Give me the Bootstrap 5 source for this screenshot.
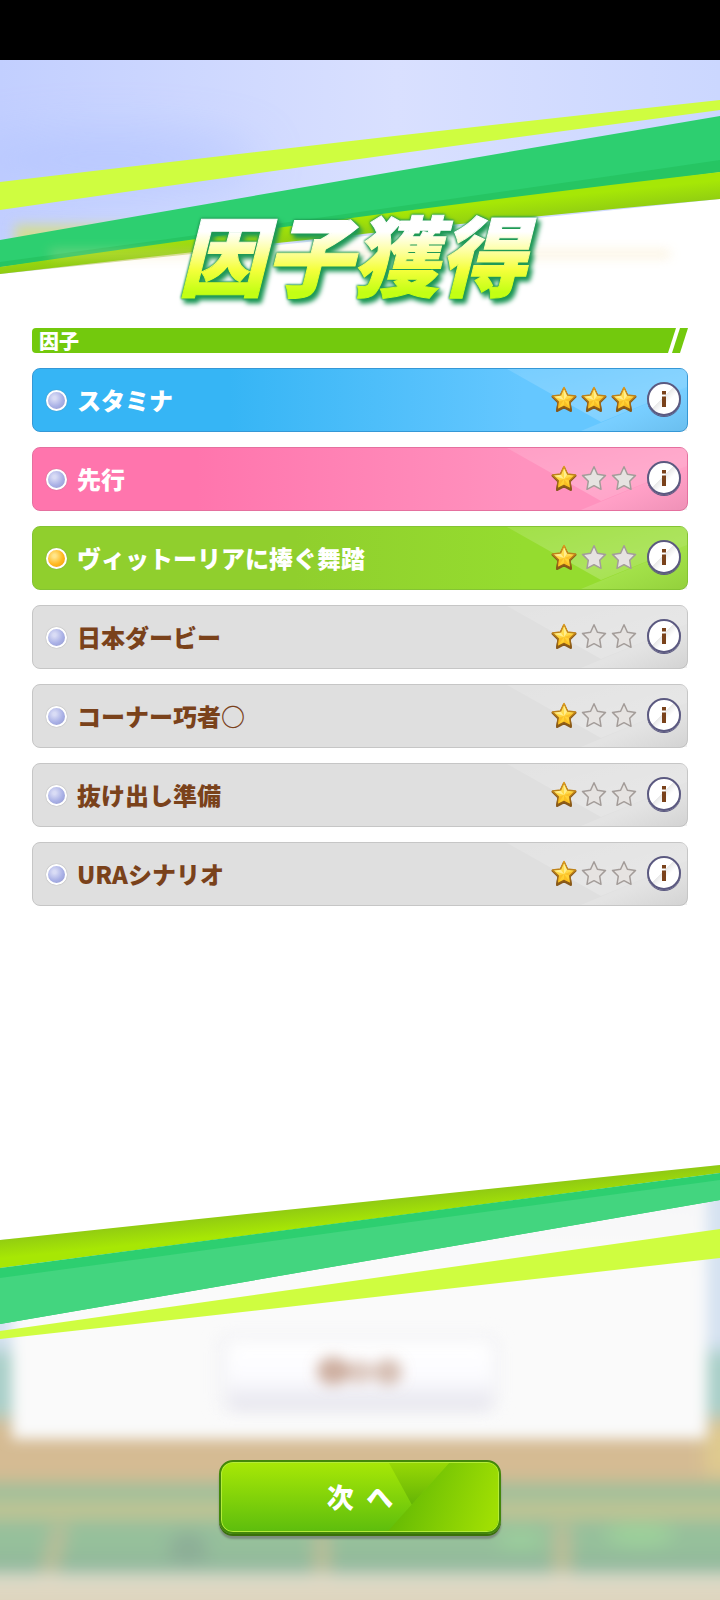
<!DOCTYPE html>
<html lang="ja">
<head>
<meta charset="utf-8">
<meta name="viewport" content="width=device-width, initial-scale=1">
<title>因子獲得</title>
<link href="https://cdn.jsdelivr.net/npm/bootstrap@5.3.0/dist/css/bootstrap.min.css" rel="stylesheet">
<style>
  body { font-family: "Noto Sans CJK JP", sans-serif; background: #fff; }
  .status-strip { height: 60px; background: #000; }
  .hero { height: 268px; }
  .backdrop { z-index: 0; }
  .hero-title {
    z-index: 1; padding: 0 28px 0 12px; margin-bottom: 20px; font-size: 87px; line-height: 112px; font-weight: 900; font-style: italic;
    color: transparent; background: linear-gradient(#fff 32%, #fdff9c 50%, #f4ff3c 66%, #c3ff14 86%);
    -webkit-background-clip: text; background-clip: text; -webkit-text-stroke: 1px transparent;
    filter: drop-shadow(0 0 1px #1f9a55) drop-shadow(0 0 1px #1f9a55) drop-shadow(3px 4px 2px #1d9757);
  }
  .section-bar { height: 25px; margin-bottom: 15px; }
  .section-bar h2 {
    font-size: 20px; line-height: 25px; font-weight: 900; color: #fff; background: #73c90d;
    padding-left: 7px; border-radius: 4px 0 0 4px;
    clip-path: polygon(0 0, 100% 0, calc(100% - 8px) 100%, 0 100%);
  }
  .section-slash { width: 16px; margin-left: -4px; background: #73c90d; clip-path: polygon(50% 0, 100% 0, 50% 100%, 0 100%); }
  .factor-list { gap: 15px; }
  .factor {
    height: 64px; padding: 0 6px 0 13px; border: 1px solid; border-radius: 8px; font-size: 24px; line-height: 36px;
    font-weight: 900; gap: 10px;
  }
  .factor-blue { color: #fff; border-color: #3598d6; background: linear-gradient(90deg, #36b5f5 30%, #65c7ff 75%); }
  .factor-pink { color: #fff; border-color: #e5709f; background: linear-gradient(90deg, #ff75ad 25%, #ff92be 75%); }
  .factor-green { color: #fff; border-color: #84c433; background: linear-gradient(90deg, #90cf2d 40%, #95dc2f 75%); }
  .factor-gray { color: #7a421b; border-color: #c6c6c6; background: #dfdfdf; }
  .facet { width: 180px; right: 0; }
  .gem {
    width: 21px; height: 21px; border: 2px solid #fff; border-radius: 50%; box-shadow: 0 0 1px #777;
    background: radial-gradient(circle at 38% 35%, #d9dcf5 10%, #aab1e6 55%, #8f95cc 100%);
  }
  .gem-gold { background: radial-gradient(circle at 38% 35%, #ffe58a 10%, #ffb81f 55%, #ee9410 100%); }
  .stars { gap: 4px; }
  .info-btn {
    width: 34px; height: 34px; border: 2px solid #5b5980; border-radius: 50%; margin-bottom: 2px;
    background: linear-gradient(135deg, #fff 45%, #e9e9e9 46%, #fff 62%); box-shadow: 0 1px 0 #5b5980;
  }
  .scene { height: 450px; }
  .next-btn {
    z-index: 1; width: 282px; height: 74px; margin-bottom: 66px; border: 2px solid #43870a; border-radius: 14px;
    color: #fff; font-size: 27px; line-height: 40px; font-weight: 900;
    background: linear-gradient(#a8e806, #5dbd0d);
    box-shadow: inset 0 0 0 1px #b5ec39, 0 2px 0 #397008, 0 5px 2px #7c8f7c;
  }
</style>
</head>
<body class="d-flex flex-column min-vh-100">

<svg class="position-absolute" width="0" height="0" aria-hidden="true">
  <defs>
    <linearGradient id="gold" x1="0" y1="0" x2="0" y2="1"><stop offset="0" stop-color="#ffe76a"/><stop offset="1" stop-color="#ffc81d"/></linearGradient>
    <linearGradient id="goldEdge" x1="0" y1="0" x2="0" y2="1"><stop offset="0" stop-color="#dc9a1c"/><stop offset="1" stop-color="#8a5814"/></linearGradient>
    <linearGradient id="facetLight" x1="0" y1="0" x2="1" y2="1"><stop offset="0" stop-color="#fff" stop-opacity=".12"/><stop offset=".6" stop-color="#fff" stop-opacity=".22"/><stop offset="1" stop-color="#fff" stop-opacity=".12"/></linearGradient>
    <linearGradient id="facetDark" x1="0" y1="0" x2="1" y2="1"><stop offset="0" stop-color="#fff" stop-opacity=".35"/><stop offset=".55" stop-color="#fff" stop-opacity=".12"/><stop offset="1" stop-color="#888" stop-opacity=".14"/></linearGradient>
  </defs>
  <symbol id="star-on" viewBox="0 0 26 28">
    <path d="M13 2.500 16.400 9.700 24.500 10.800 18.700 16.600 20 25 13 21.300 6 25 7.300 16.600 1.500 10.800 9.600 9.700Z" fill="#85571b" stroke="#85571b" stroke-width="2" stroke-linejoin="round"/>
    <path d="M13 1.500 16.400 9 24.500 10.100 18.700 15.800 20 23.900 13 20.300 6 23.900 7.300 15.800 1.500 10.100 9.600 9Z" fill="url(#gold)" stroke="url(#goldEdge)" stroke-width="1.500" stroke-linejoin="round"/>
    <path d="M13 14 23 10.800 18 15.600ZM13 14 19 22.500 13 19.600ZM13 14 7 22.500 8 15.600Z" fill="#f9b41d" opacity=".6"/>
    <path d="M13 3.500 16 9.700 13 14ZM13 14 2.800 10.800 9.800 9.700Z" fill="#fff19a" opacity=".85"/>
  </symbol>
  <symbol id="star-off" viewBox="0 0 26 28">
    <path d="M13 1.800 16.400 9.300 24.500 10.400 18.700 16.200 20 24.300 13 20.700 6 24.300 7.300 16.200 1.500 10.400 9.600 9.300Z" fill="#e6e3e1" stroke="#a39c99" stroke-width="1.500" stroke-linejoin="round"/>
  </symbol>
  <symbol id="facet-shape" viewBox="0 0 180 62" preserveAspectRatio="none">
    <path d="M0 0H180V18L94 53Z" fill="url(#facetLight)"/>
    <path d="M74 62 180 18V62Z" fill="url(#facetDark)"/>
  </symbol>
  <symbol id="info-glyph" viewBox="0 0 6 18">
    <path d="M1 1H5V4.500H1ZM1 6.500H5V17H1Z" fill="#7a421b"/>
  </symbol>
</svg>

<div class="status-strip flex-shrink-0"></div>

<header class="hero position-relative overflow-hidden d-flex justify-content-center align-items-end flex-shrink-0">
  <svg class="backdrop position-absolute top-0 start-0 w-100 h-100" viewBox="0 0 720 268" preserveAspectRatio="none" aria-hidden="true">
    <defs>
      <linearGradient id="sky" x1="0" y1="0" x2="1" y2="0"><stop offset="0" stop-color="#c2cfff"/><stop offset=".55" stop-color="#d9e0ff"/><stop offset="1" stop-color="#cbd7ff"/></linearGradient>
      <linearGradient id="lime" gradientUnits="userSpaceOnUse" x1="352" y1="157" x2="354" y2="177"><stop offset="0" stop-color="#a6e706"/><stop offset="1" stop-color="#90cd12"/></linearGradient>
      <filter id="haze" filterUnits="userSpaceOnUse" x="-120" y="-40" width="500" height="300"><feGaussianBlur stdDeviation="24"/></filter>
      <filter id="hazeSmall" filterUnits="userSpaceOnUse" x="-30" y="130" width="780" height="120"><feGaussianBlur stdDeviation="6"/></filter>
    </defs>
    <path d="M0 0H720V268H0Z" fill="url(#sky)"/>
    <ellipse cx="110" cy="100" rx="150" ry="26" fill="#b4c5ff" opacity=".8" filter="url(#haze)"/>
    <path d="M15 165H200V210H15Z" fill="#d3dd94" filter="url(#hazeSmall)"/>
    <path d="M0 214 720 139V268H0Z" fill="#fff"/>
    <path d="M0 122Q360 79 720 40V50Q360 98 0 150Z" fill="#cffd40"/>
    <path d="M0 180Q360 117 720 56V112L0 207Z" fill="#2dcf70"/>
    <path d="M0 202Q360 153 720 100V112L0 207Z" fill="#26c563"/>
    <path d="M0 207Q360 154 720 112V139Q360 172 0 214Z" fill="url(#lime)"/>
    <path d="M50 191H670V197H50Z" fill="#f5dda0" opacity=".45" filter="url(#hazeSmall)"/>
  </svg>
  <h1 class="hero-title position-relative">因子獲得</h1>
</header>

<main class="px-4 flex-grow-1">
  <div class="px-2">
    <div class="section-bar d-flex">
      <h2 class="flex-grow-1 mb-0">因子</h2>
      <span class="section-slash"></span>
    </div>
    <ul class="factor-list list-unstyled d-flex flex-column mb-5" id="factors"></ul>
  </div>
</main>

<footer class="scene position-relative overflow-hidden d-flex justify-content-center align-items-end flex-shrink-0">
  <svg class="backdrop position-absolute top-0 start-0 w-100 h-100" viewBox="0 0 720 450" preserveAspectRatio="none" aria-hidden="true">
    <defs>
      <filter id="soft" filterUnits="userSpaceOnUse" x="-60" y="-60" width="840" height="600"><feGaussianBlur stdDeviation="9"/></filter>
      <filter id="softer" filterUnits="userSpaceOnUse" x="-60" y="-60" width="840" height="600"><feGaussianBlur stdDeviation="7"/></filter>
      <linearGradient id="limeLow" gradientUnits="userSpaceOnUse" x1="352" y1="53" x2="354" y2="73"><stop offset="0" stop-color="#91cb12"/><stop offset="1" stop-color="#a7e704"/></linearGradient>
      <linearGradient id="cardShade" x1="0" y1="0" x2="0" y2="1"><stop offset="0" stop-color="#f5f5f7"/><stop offset=".5" stop-color="#fafafa"/></linearGradient>
      <linearGradient id="ghost" x1="0" y1="0" x2="0" y2="1"><stop offset="0" stop-color="#fff"/><stop offset=".5" stop-color="#fcfcff"/><stop offset="1" stop-color="#e4e3ec"/></linearGradient>
    </defs>
    <g filter="url(#soft)">
      <path d="M-60-60H780V200H-60Z" fill="#d5e2f1"/>
      <path d="M-60 200H780V275H-60Z" fill="#a9cfc8"/>
      <path d="M-60 268H780V335H-60Z" fill="#d5bb93"/>
      <path d="M705 275H780V325H705Z" fill="#dfca8f"/>
      <path d="M-60 333H780V425H-60Z" fill="#96c09b"/>
      <path d="M-60 351H780V368H-60Z" fill="#c6c493"/>
      <path d="M-60 409H780V423H-60Z" fill="#8fb49a"/>
      <path d="M55 375H67L54 425H42ZM555 375H569V425H555ZM316 380H328V425H316Z" fill="#c5bd97"/>
      <ellipse cx="188" cy="398" rx="20" ry="16" fill="#8dae97"/>
      <ellipse cx="640" cy="385" rx="34" ry="11" fill="#9dd19a"/>
      <ellipse cx="520" cy="390" rx="24" ry="9" fill="#9bcf9c"/>
      <path d="M-60 429H780V520H-60Z" fill="#ded5bf"/>
    </g>
    <path d="M12-20H707V289H12Z" fill="url(#cardShade)" filter="url(#softer)"/>
    <rect x="214" y="182" width="288" height="82" rx="14" fill="#f3f3f6" opacity=".65" filter="url(#softer)"/>
    <rect x="228" y="192" width="264" height="68" rx="10" fill="url(#ghost)" filter="url(#softer)"/>
    <g filter="url(#softer)" fill="#bd9480">
      <ellipse cx="333" cy="221" rx="16" ry="14" opacity=".75"/>
      <ellipse cx="359" cy="222" rx="15" ry="11" opacity=".5"/>
      <ellipse cx="388" cy="222" rx="14" ry="13" opacity=".6"/>
    </g>
    <path d="M0-5H720V15L0 90Z" fill="#fff"/>
    <path d="M0 90Q360 52 720 15V23L0 118Z" fill="url(#limeLow)"/>
    <path d="M0 118Q360 70 720 23V50Q360 112 0 174Z" fill="#2dcf70"/>
    <path d="M0 128Q360 79 720 30V50Q360 112 0 174Z" fill="#43d57f"/>
    <path d="M0 181Q360 130 720 79V108Q360 149 0 189Z" fill="#cffd40"/>
  </svg>
  <button type="button" class="next-btn position-relative overflow-hidden p-0">
    <svg class="position-absolute top-0 start-0 w-100 h-100" viewBox="0 0 278 70" preserveAspectRatio="none" aria-hidden="true">
      <defs>
        <linearGradient id="sheen" x1="0" y1="0.400" x2="1" y2="0.600"><stop offset="0" stop-color="#5fb604"/><stop offset="1" stop-color="#a0df03"/></linearGradient>
        <linearGradient id="wedge" x1="0" y1="0" x2="0" y2="1"><stop offset="0" stop-color="#97d805"/><stop offset="1" stop-color="#64b406"/></linearGradient>
      </defs>
      <path d="M168 1H228L191 43Z" fill="url(#wedge)"/>
      <path d="M228 1H265Q277 1 277 13V57Q277 69 265 69H167Z" fill="url(#sheen)"/>
    </svg>
    <span class="position-relative">次&nbsp;&nbsp;へ</span>
  </button>
</footer>

<script src="https://cdn.jsdelivr.net/npm/bootstrap@5.3.0/dist/js/bootstrap.bundle.min.js"></script>
<script>
  const factors = [
    { name: 'スタミナ', tone: 'blue', stars: 3 },
    { name: '先行', tone: 'pink', stars: 1 },
    { name: 'ヴィットーリアに捧ぐ舞踏', tone: 'green', stars: 1, gold: true },
    { name: '日本ダービー', tone: 'gray', stars: 1 },
    { name: 'コーナー巧者○', tone: 'gray', stars: 1 },
    { name: '抜け出し準備', tone: 'gray', stars: 1 },
    { name: 'URAシナリオ', tone: 'gray', stars: 1 }
  ];
  document.getElementById('factors').innerHTML = factors.map(f => `
    <li class="factor factor-${f.tone} position-relative d-flex align-items-center">
      <svg class="facet position-absolute top-0 h-100" aria-hidden="true"><use href="#facet-shape"/></svg>
      <span class="gem ${f.gold ? 'gem-gold' : ''} flex-shrink-0"></span>
      <span class="position-relative flex-grow-1 text-nowrap">${f.name}</span>
      <span class="stars position-relative d-flex" role="img" aria-label="${f.stars} / 3">
        ${[1, 2, 3].map(n => `<svg width="26" height="28"><use href="#star-${n <= f.stars ? 'on' : 'off'}"/></svg>`).join('')}
      </span>
      <button type="button" class="info-btn position-relative d-flex align-items-center justify-content-center flex-shrink-0 p-0" aria-label="${f.name}の詳細">
        <svg width="6" height="18"><use href="#info-glyph"/></svg>
      </button>
    </li>`).join('');
</script>
</body>
</html>
